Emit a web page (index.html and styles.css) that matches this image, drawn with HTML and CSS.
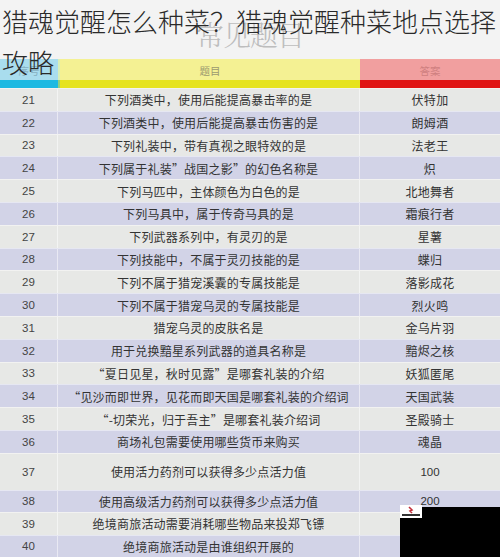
FILE: index.html
```html
<!DOCTYPE html>
<html lang="zh-CN">
<head>
<meta charset="utf-8">
<title>猎魂觉醒怎么种菜？猎魂觉醒种菜地点选择攻略</title>
<link rel="stylesheet" href="styles.css">
</head>
<body>
<div class="page">
  <h1 class="title">猎魂觉醒怎么种菜？猎魂觉醒种菜地点选择攻略</h1>
  <div class="banner"><span class="watermark">常见题目</span></div>
  <div class="head">
    <div class="hcell c-num">序号</div>
    <div class="hcell c-q">题目</div>
    <div class="hcell c-a">答案</div>
  </div>
  <div class="stripe">
    <div class="s-num"></div><div class="s-q"></div><div class="s-a"></div>
  </div>
  <div class="rows">
    <div class="row odd"><div class="num">21</div><div class="q">下列酒类中，使用后能提高暴击率的是</div><div class="a">伏特加</div></div>
    <div class="row even"><div class="num">22</div><div class="q">下列酒类中，使用后能提高暴击伤害的是</div><div class="a">朗姆酒</div></div>
    <div class="row odd"><div class="num">23</div><div class="q">下列礼装中，带有真视之眼特效的是</div><div class="a">法老王</div></div>
    <div class="row even"><div class="num">24</div><div class="q">下列属于礼装”战国之影”的幻色名称是</div><div class="a">炽</div></div>
    <div class="row odd"><div class="num">25</div><div class="q">下列马匹中，主体颜色为白色的是</div><div class="a">北地舞者</div></div>
    <div class="row even"><div class="num">26</div><div class="q">下列马具中，属于传奇马具的是</div><div class="a">霜痕行者</div></div>
    <div class="row odd"><div class="num">27</div><div class="q">下列武器系列中，有灵刃的是</div><div class="a">星薯</div></div>
    <div class="row even"><div class="num">28</div><div class="q">下列技能中，不属于灵刃技能的是</div><div class="a">蝶归</div></div>
    <div class="row odd"><div class="num">29</div><div class="q">下列不属于猎宠溪囊的专属技能是</div><div class="a">落影成花</div></div>
    <div class="row even"><div class="num">30</div><div class="q">下列不属于猎宠乌灵的专属技能是</div><div class="a">烈火鸣</div></div>
    <div class="row odd"><div class="num">31</div><div class="q">猎宠乌灵的皮肤名是</div><div class="a">金乌片羽</div></div>
    <div class="row even"><div class="num">32</div><div class="q">用于兑换黯星系列武器的道具名称是</div><div class="a">黯烬之核</div></div>
    <div class="row odd"><div class="num">33</div><div class="q">“夏日见星，秋时见露”是哪套礼装的介绍</div><div class="a">妖狐匿尾</div></div>
    <div class="row even"><div class="num">34</div><div class="q">“见沙而即世界，见花而即天国是哪套礼装的介绍词</div><div class="a">天国武装</div></div>
    <div class="row odd"><div class="num">35</div><div class="q">“-切荣光，归于吾主”是哪套礼装介绍词</div><div class="a">圣殿骑士</div></div>
    <div class="row even"><div class="num">36</div><div class="q">商场礼包需要使用哪些货币来购买</div><div class="a">魂晶</div></div>
    <div class="row odd tall"><div class="num">37</div><div class="q">使用活力药剂可以获得多少点活力值</div><div class="a digits">100</div></div>
    <div class="row even short"><div class="num">38</div><div class="q">使用高级活力药剂可以获得多少点活力值</div><div class="a digits">200</div></div>
    <div class="row odd short"><div class="num">39</div><div class="q">绝境商旅活动需要消耗哪些物品来投郑飞镖</div><div class="a"></div></div>
    <div class="row even short"><div class="num">40</div><div class="q">绝境商旅活动是由谁组织开展的</div><div class="a"></div></div>
  </div>
  <div class="cover">
    <div class="logo">
      <svg width="22" height="13" viewBox="0 0 22 13">
        <rect width="22" height="13" fill="#ffffff"/>
        <path d="M9 2 L12 5 L10 6 L12 8" stroke="#c2303a" stroke-width="1.6" fill="none"/>
        <rect x="2" y="9" width="18" height="2" fill="#333"/>
      </svg>
    </div>
  </div>
</div>
</body>
</html>
```
FILE: styles.css
```css
html, body {
  margin: 0;
  padding: 0;
  width: 500px;
  height: 557px;
  overflow: hidden;
  background: #f2f2f2;
}

.page {
  position: relative;
  width: 500px;
  height: 557px;
  font-family: "Noto Sans CJK SC", "Liberation Sans", sans-serif;
}

.title {
  position: absolute;
  top: 0;
  left: 0;
  z-index: 2;
  margin: 0;
  padding-left: 2px;
  width: 498px;
  font-size: 26px;
  line-height: 41px;
  font-weight: 300;
  color: #2a2a2a;
}

.banner {
  height: 59px;
  display: flex;
  justify-content: center;
  background: #f3f3f3;
}

.watermark {
  margin-top: 18px;
  font-family: "Noto Serif CJK SC", "Noto Sans CJK SC", serif;
  font-size: 28px;
  line-height: 32px;
  font-weight: 300;
  color: #bdbdbd;
  letter-spacing: -1px;
}

.head {
  display: grid;
  grid-template-columns: 58px 302px 140px;
  height: 21px;
}

.hcell {
  display: flex;
  align-items: center;
  justify-content: center;
  font-size: 10.5px;
  padding-top: 2px;
}

.head .c-num { background: #a9ddee; color: #86b0c2; }
.head .c-q { background: #f4f193; color: #9c9a70; border-left: 2px solid #d8efb8; }
.head .c-a { background: #f19f9f; color: #cf8080; }

.stripe {
  display: grid;
  grid-template-columns: 58px 302px 140px;
  height: 8px;
}

.s-num { background: #1cb9e2; }
.s-q { background: #e6e31e; border-left: 2px solid #8fd080; }
.s-a { background: #e01515; }

.row {
  display: grid;
  grid-template-columns: 58px 302px 140px;
  height: 22.8px;
  box-sizing: border-box;
  border-top: 1px solid rgba(255, 255, 255, 0.45);
  color: #333;
}

.row.tall { height: 37px; }
.row.short { height: 22.4px; }

.odd { background: #e7e8e6; }
.even { background: #d2d3e7; }

.num, .q, .a {
  display: flex;
  align-items: center;
  justify-content: center;
  white-space: nowrap;
}

.num {
  font-family: "Liberation Sans", sans-serif;
  font-size: 11.5px;
  color: #444;
  border-right: 1px solid rgba(255, 255, 255, 0.5);
}

.q {
  font-size: 12px;
  letter-spacing: 0.2px;
  border-right: 1px solid rgba(255, 255, 255, 0.5);
}

.a {
  font-size: 12px;
  letter-spacing: 0.3px;
}

.a.digits {
  font-family: "Liberation Sans", sans-serif;
  font-size: 11.5px;
  letter-spacing: 0;
}

.cover {
  position: absolute;
  left: 400px;
  top: 507px;
  width: 100px;
  height: 50px;
  background: #000;
}

.logo {
  position: absolute;
  left: 0;
  top: -2px;
  width: 22px;
  height: 13px;
}

.logo svg { display: block; }
```
